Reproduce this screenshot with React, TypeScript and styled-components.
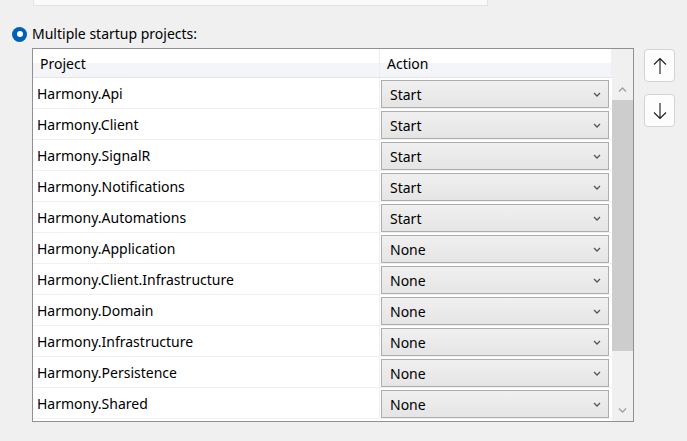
import { createGlobalStyle } from 'styled-components';
import styled from 'styled-components';

const GlobalStyle = createGlobalStyle`
  html, body {
    margin: 0;
    padding: 0;
    background: #f0f0f0;
  }
  body {
    font-family: 'Noto Sans', 'Segoe UI', sans-serif;
    font-size: 14px;
    color: #000;
  }
`;

const Page = styled.div`
  width: 687px;
  height: 441px;
  overflow: hidden;
  background: #f0f0f0;
  display: flex;
  flex-direction: column;
`;

const TopBox = styled.div`
  margin-left: 33px;
  width: 453px;
  height: 5px;
  background: #fafafa;
  border: 1px solid #e3e3e3;
  border-top: none;
`;

const RadioRow = styled.label`
  display: flex;
  align-items: center;
  gap: 5px;
  margin: 19px 0 0 12px;
  height: 18px;
  line-height: 18px;
`;

const RadioDot = styled.span`
  width: 15px;
  height: 15px;
  box-sizing: border-box;
  border-radius: 50%;
  background: #005fb8;
  display: flex;
  align-items: center;
  justify-content: center;

  &::after {
    content: '';
    width: 6px;
    height: 6px;
    border-radius: 50%;
    background: #fff;
  }
`;

const Body = styled.div`
  display: flex;
  gap: 10px;
  margin: 5px 0 0 32px;
`;

const Grid = styled.div`
  width: 602px;
  height: 374px;
  box-sizing: border-box;
  border: 1px solid #8f9195;
  background: #fff;
  display: flex;
  overflow: hidden;
`;

const Table = styled.div`
  width: 579px;
  display: flex;
  flex-direction: column;
`;

const HeaderRow = styled.div`
  display: grid;
  grid-template-columns: 347px 232px;
  height: 29px;
  flex-shrink: 0;
  background: linear-gradient(#ffffff 0%, #ffffff 50%, #f3f5f8 50%, #f3f5f8 100%);
  border-bottom: 1px solid #e3e5e8;
  box-sizing: border-box;
`;

const HeaderCell = styled.div`
  display: flex;
  align-items: center;
  padding-left: 7px;
  border-right: 1px solid #eceef2;
`;

const Row = styled.div`
  display: grid;
  grid-template-columns: 347px 232px;
  height: 31px;
  flex-shrink: 0;
  box-sizing: border-box;
  border-bottom: 1px solid #f0f0f0;
`;

const NameCell = styled.div`
  display: flex;
  align-items: center;
  padding: 0 0 0 4px;
  border-right: 1px solid #f0f0f0;
`;

const ActionCell = styled.div`
  padding: 2px 3px 0 1px;
`;

const Combo = styled.div`
  height: 28px;
  box-sizing: border-box;
  border: 1px solid #adadad;
  background: linear-gradient(#f0f0f0, #e5e5e5);
  display: flex;
  align-items: center;
  justify-content: space-between;
  padding: 0 7px 0 8px;
`;

const Chevron = ({ color = '#555', w = 8 }: { color?: string; w?: number }) => (
  <svg width={w} height={5} viewBox="0 0 8 5">
    <path d="M1 1 L4 4 L7 1" fill="none" stroke={color} strokeWidth={1.3} />
  </svg>
);

const ScrollBar = styled.div`
  width: 21px;
  display: flex;
  flex-direction: column;
  background: #f0f0f0;
`;

const ScrollCorner = styled.div`
  height: 29px;
  flex-shrink: 0;
`;

const ScrollArrow = styled.div`
  height: 22px;
  flex-shrink: 0;
  display: flex;
  align-items: center;
  justify-content: center;
`;

const ScrollThumb = styled.div`
  height: 251px;
  flex-shrink: 0;
  background: #cdcdcd;
`;

const ScrollTrack = styled.div`
  flex: 1;
`;

const SideButtons = styled.div`
  display: flex;
  flex-direction: column;
  gap: 12px;
  padding-top: 1px;
`;

const MoveButton = styled.button`
  width: 31px;
  height: 33px;
  box-sizing: border-box;
  border: 1px solid #d3d3d3;
  border-radius: 4px;
  background: #fdfdfd;
  padding: 0;
  display: flex;
  align-items: center;
  justify-content: center;
`;

const ArrowIcon = ({ down }: { down?: boolean }) => (
  <svg width="14" height="18" viewBox="0 0 14 18" style={down ? { transform: 'rotate(180deg)' } : undefined}>
    <path d="M7 1.5 V17 M1 7.5 L7 1.5 L13 7.5" fill="none" stroke="#1a1a1a" strokeWidth={1.1} />
  </svg>
);

const projects: [string, string][] = [
  ['Harmony.Api', 'Start'],
  ['Harmony.Client', 'Start'],
  ['Harmony.SignalR', 'Start'],
  ['Harmony.Notifications', 'Start'],
  ['Harmony.Automations', 'Start'],
  ['Harmony.Application', 'None'],
  ['Harmony.Client.Infrastructure', 'None'],
  ['Harmony.Domain', 'None'],
  ['Harmony.Infrastructure', 'None'],
  ['Harmony.Persistence', 'None'],
  ['Harmony.Shared', 'None'],
];

export default function App() {
  return (
    <>
      <GlobalStyle />
      <Page>
        <TopBox />
        <RadioRow>
          <RadioDot />
          Multiple startup projects:
        </RadioRow>
        <Body>
          <Grid>
            <Table>
              <HeaderRow>
                <HeaderCell>Project</HeaderCell>
                <HeaderCell>Action</HeaderCell>
              </HeaderRow>
              {projects.map(([name, action]) => (
                <Row key={name}>
                  <NameCell>{name}</NameCell>
                  <ActionCell>
                    <Combo>
                      {action}
                      <Chevron />
                    </Combo>
                  </ActionCell>
                </Row>
              ))}
            </Table>
            <ScrollBar>
              <ScrollCorner />
              <ScrollArrow>
                <svg width="9" height="5" viewBox="0 0 9 5">
                  <path d="M1 4.5 L4.5 1 L8 4.5" fill="none" stroke="#a0a0a0" strokeWidth={1.3} />
                </svg>
              </ScrollArrow>
              <ScrollThumb />
              <ScrollTrack />
              <ScrollArrow>
                <svg width="9" height="5" viewBox="0 0 9 5">
                  <path d="M1 0.5 L4.5 4 L8 0.5" fill="none" stroke="#a0a0a0" strokeWidth={1.3} />
                </svg>
              </ScrollArrow>
            </ScrollBar>
          </Grid>
          <SideButtons>
            <MoveButton>
              <ArrowIcon />
            </MoveButton>
            <MoveButton>
              <ArrowIcon down />
            </MoveButton>
          </SideButtons>
        </Body>
      </Page>
    </>
  );
}
